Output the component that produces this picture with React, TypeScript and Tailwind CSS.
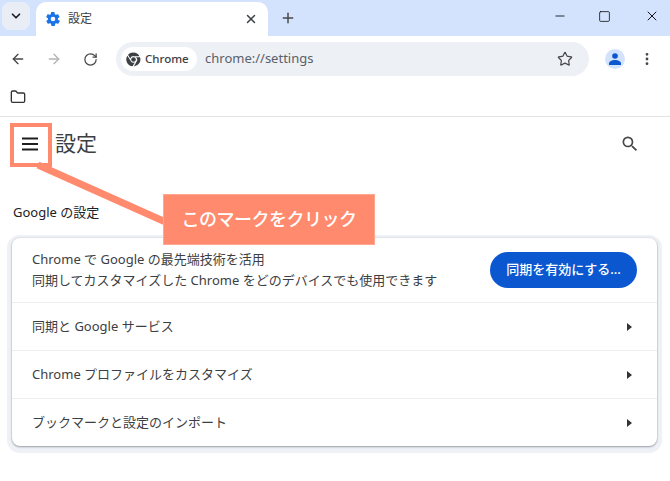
import React from "react";
import { ArrowLeft, ArrowRight, ChevronDown, Folder, Minus, MoreVertical, Plus, RotateCw, Square, Star, X } from "lucide-react";

const font = "font-['Noto_Sans','Noto_Sans_CJK_JP',sans-serif]";

const GearIcon = () => (
  <svg width="16" height="16" viewBox="0 0 24 24" fill="#1a73e8">
    <path
      fillRule="evenodd"
      d="M19.4 13a7.6 7.6 0 0 0 0-2l2.2-1.7a.5.5 0 0 0 .1-.7l-2.1-3.6a.5.5 0 0 0-.6-.2l-2.6 1a7.6 7.6 0 0 0-1.7-1l-.4-2.8a.5.5 0 0 0-.5-.4H9.6a.5.5 0 0 0-.5.4l-.4 2.8a7.6 7.6 0 0 0-1.7 1l-2.6-1a.5.5 0 0 0-.6.2L2 8.6a.5.5 0 0 0 .1.7L4.4 11a7.6 7.6 0 0 0 0 2l-2.2 1.7a.5.5 0 0 0-.1.7l2.1 3.6c.1.2.4.3.6.2l2.6-1a7.6 7.6 0 0 0 1.7 1l.4 2.8c0 .2.3.4.5.4h4.2c.2 0 .5-.2.5-.4l.4-2.8a7.6 7.6 0 0 0 1.7-1l2.6 1c.2.1.5 0 .6-.2l2.1-3.6a.5.5 0 0 0-.1-.7zM12 15.5a3.5 3.5 0 1 1 0-7 3.5 3.5 0 0 1 0 7z"
    />
  </svg>
);

const ChromeIcon = () => (
  <svg width="15" height="15" viewBox="0 0 24 24" fill="#3c4043">
    <path d="M12 1a11 11 0 0 1 9.6 5.6H12a5.4 5.4 0 0 0-5.2 3.9L3.2 4.4A11 11 0 0 1 12 1z" />
    <path d="M22.4 8.3A11 11 0 0 1 12.6 23l4.2-7.3a5.4 5.4 0 0 0-.9-7.4z" />
    <path d="M2.2 6a11 11 0 0 0 8.3 16.9l3.6-6.2a5.4 5.4 0 0 1-7.1-3.2z" />
    <circle cx="12" cy="12" r="3.7" />
  </svg>
);

const ProfileIcon = () => (
  <div className="flex h-5 w-5 items-center justify-center rounded-full bg-[#d3e3fd]">
    <svg width="14" height="14" viewBox="0 0 14 14" fill="#0b57d0">
      <circle cx="7" cy="4" r="2.8" />
      <path d="M1 13v-1.5C1 9.4 4 8 7 8s6 1.4 6 3.5V13z" />
    </svg>
  </div>
);

const MenuIcon = () => (
  <svg width="16" height="14" viewBox="0 0 16 14" fill="#1f1f1f">
    <rect x="0" y="0.5" width="16" height="2" />
    <rect x="0" y="6" width="16" height="2" />
    <rect x="0" y="11.5" width="16" height="2" />
  </svg>
);

const SearchIcon = () => (
  <svg width="20" height="20" viewBox="0 0 24 24" fill="#474747">
    <path d="M15.5 14h-.79l-.28-.27A6.47 6.47 0 0 0 16 9.5 6.5 6.5 0 1 0 9.5 16c1.61 0 3.09-.59 4.23-1.57l.27.28v.79l5 4.99L20.49 19l-4.99-5zm-6 0C7.01 14 5 11.99 5 9.5S7.01 5 9.5 5 14 7.01 14 9.5 11.99 14 9.5 14z" />
  </svg>
);

const TabStrip = () => (
  <div className="flex h-9 items-end bg-[#d3e3fd]">
    <div className="mb-[6px] ml-[2px] flex h-[28px] w-[28px] items-center justify-center rounded-lg bg-[#e9eef6]">
      <ChevronDown size={14} strokeWidth={3} className="text-[#1f1f1f]" />
    </div>
    <div className="ml-[6px] flex h-[34px] w-[232px] items-center rounded-t-[10px] bg-white pr-[10px] pl-[9px]">
      <GearIcon />
      <span className="ml-[7px] flex-1 text-xs text-[#3c4043]">設定</span>
      <X size={14} strokeWidth={2.5} className="text-[#3c4043]" />
    </div>
    <div className="mb-[10px] ml-[12px] flex h-4 w-4 items-center justify-center">
      <Plus size={16} strokeWidth={2.2} className="text-[#474747]" />
    </div>
    <div className="mb-[12px] ml-auto flex items-center">
      <Minus size={14} strokeWidth={1.5} className="mr-[31px] text-[#111]" />
      <Square size={13} strokeWidth={1.5} className="mr-[33px] text-[#111]" />
      <X size={16} strokeWidth={1.5} className="mr-[10px] text-[#111]" />
    </div>
  </div>
);

const Toolbar = () => (
  <div className="flex h-[44px] items-center bg-white pt-[2px]">
    <ArrowLeft size={16} strokeWidth={2} className="ml-[10px] text-[#474747]" />
    <ArrowRight size={16} strokeWidth={2} className="ml-[20px] text-[#b4b4b4]" />
    <RotateCw size={15} strokeWidth={2} className="ml-[21px] text-[#474747]" />
    <div className="ml-[18px] flex h-[34px] w-[473px] items-center rounded-full bg-[#edf0f5] pr-[16px] pl-[5px]">
      <div className="flex h-6 w-[76px] items-center rounded-full bg-white pl-[5px]">
        <ChromeIcon />
        <span className="ml-[4px] text-[11.5px] font-medium text-[#3c4043]">Chrome</span>
      </div>
      <span className="ml-[8px] flex-1 text-[13px] text-[#5a6068]">chrome://settings</span>
      <Star size={16} strokeWidth={1.8} className="text-[#474747]" />
    </div>
    <div className="ml-[16px]">
      <ProfileIcon />
    </div>
    <MoreVertical size={16} strokeWidth={2.2} className="ml-[14px] text-[#474747]" />
  </div>
);

const Row = ({ label }: { label: string }) => (
  <div className="flex h-12 items-center justify-between border-t border-[#edeef1] pt-[1px] pr-[25px] pl-5">
    <span className="text-[13px] text-[#3c4043]">{label}</span>
    <div className="h-0 w-0 border-y-[4px] border-l-[5px] border-y-transparent border-l-[#333]" />
  </div>
);

const Card = () => (
  <div className="mt-4 ml-[12px] w-[645px] rounded-lg bg-white shadow-[0_1px_2px_#9aa0a6,0_0_0_1px_#e3e6ea,0_2px_0_5px_#eef1f5]">
    <div className="flex h-16 items-center justify-between pr-5 pl-5">
      <div className="text-[13px] leading-[21px] text-[#3c4043]">
        <div>Chrome で Google の最先端技術を活用</div>
        <div>同期してカスタマイズした Chrome をどのデバイスでも使用できます</div>
      </div>
      <div className="flex h-9 w-[147px] items-center justify-center rounded-full bg-[#0b57d0] text-[13px] font-medium text-white">
        同期を有効にする...
      </div>
    </div>
    <Row label="同期と Google サービス" />
    <Row label="Chrome プロファイルをカスタマイズ" />
    <Row label="ブックマークと設定のインポート" />
  </div>
);

// 注釈（赤枠・線・吹き出し）
const Annotation = () => (
  <>
    <div className="absolute top-[123px] left-[10px] h-[44px] w-[42px] border-[4px] border-[#ff8a6e]" />
    <svg className="absolute top-0 left-0" width="670" height="481">
      <path d="M38 165 L170 224" stroke="#ff8a6e" strokeWidth="7" fill="none" />
    </svg>
    <div className="absolute top-[194px] left-[163px] flex h-[51px] w-[212px] items-center justify-center border border-[#ffa78f] bg-[#ff8a6e] text-[18px] font-medium tracking-[-0.5px] text-white">
      このマークをクリック
    </div>
  </>
);

export default function App() {
  return (
    <div className={`relative h-[481px] w-[670px] overflow-hidden bg-white ${font}`}>
      <TabStrip />
      <Toolbar />
      <div className="flex h-[37px] items-center border-b border-[#e1e3e6] pb-[3px] pl-[10px]">
        <Folder size={16} strokeWidth={2} className="text-[#333]" />
      </div>
      <div className="flex h-[54px] items-center pr-[30px] pl-[22px]">
        <MenuIcon />
        <span className="ml-[17px] flex-1 text-[21px] text-[#3c4043]">設定</span>
        <SearchIcon />
      </div>
      <div className="mt-[31px] ml-[13px] text-[13px] leading-5 text-[#202124]">Google の設定</div>
      <Card />
      <Annotation />
    </div>
  );
}
